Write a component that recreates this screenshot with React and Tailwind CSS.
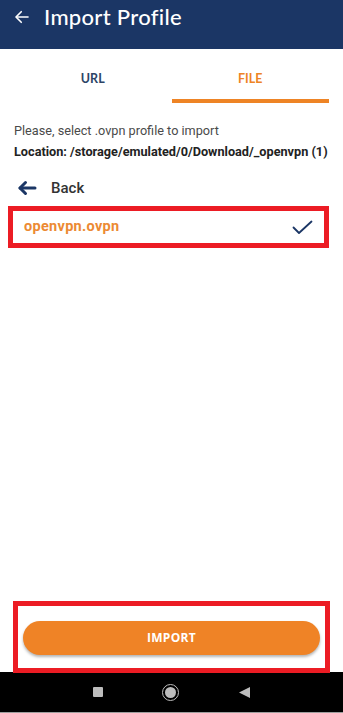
import React, { useState } from 'react';

const NAVY = '#1b3665';

export default function App() {
  const [tab, setTab] = useState('file');

  return (
    <div className="w-[343px] h-[713px] flex flex-col bg-white overflow-hidden" style={{ fontFamily: 'Roboto, "Liberation Sans", sans-serif' }}>
      {/* Toolbar */}
      <div className="h-[49px] shrink-0 bg-[#1b3665] flex items-center pl-[13px] pb-[16px]">
        <svg width="18" height="18" viewBox="0 0 24 24" fill="none" stroke="white" strokeWidth="2.2" strokeLinecap="round" strokeLinejoin="round">
          <path d="M20 12H5" />
          <path d="M11 5l-7 7 7 7" />
        </svg>
        <span className="ml-[13px] text-white text-[22px] leading-none font-medium tracking-[0.3px]" style={{ fontFamily: 'Lato, sans-serif' }}>Import Profile</span>
      </div>

      {/* Tabs */}
      <div className="flex h-[54px] shrink-0 pl-[14px] pr-[14px]" style={{ fontFamily: 'Lato, sans-serif' }}>
        <button onClick={() => setTab('url')} className="flex-1 flex flex-col items-center">
          <span className={`mt-[24px] text-[12.5px] font-bold leading-none ${tab === 'url' ? 'text-[#ee8425]' : 'text-[#2d4566]'}`}>URL</span>
          <span className={`mt-auto h-[4px] w-full ${tab === 'url' ? 'bg-[#ee8425]' : 'bg-transparent'}`} />
        </button>
        <button onClick={() => setTab('file')} className="flex-1 flex flex-col items-center">
          <span className={`mt-[24px] text-[12.5px] font-bold leading-none ${tab === 'file' ? 'text-[#ee8425]' : 'text-[#2d4566]'}`}>FILE</span>
          <span className={`mt-auto h-[4px] w-full ${tab === 'file' ? 'bg-[#ee8425]' : 'bg-transparent'}`} />
        </button>
      </div>

      {/* Info */}
      <div className="pl-[14px] pt-[21px]">
        <p className="text-[12.7px] leading-[14px] text-[#4a4a4a]">Please, select .ovpn profile to import</p>
        <p className="mt-[7px] text-[12.7px] leading-[14px] font-bold text-[#222] whitespace-nowrap">Location: /storage/emulated/0/Download/_openvpn (1)</p>
      </div>

      {/* Back row */}
      <div className="flex items-center h-[24px] mt-[17px] pl-[17px]">
        <svg width="20" height="16" viewBox="0 0 20 16" fill="none" stroke={NAVY} strokeWidth="3" strokeLinecap="round" strokeLinejoin="round">
          <path d="M18 8H3" />
          <path d="M8.5 2.5L3 8l5.5 5.5" />
        </svg>
        <span className="ml-[14px] text-[15px] font-medium text-[#333]">Back</span>
      </div>

      {/* File row */}
      <div className="mt-[6px] ml-[8px] w-[321px] h-[42px] border-[5px] border-[#ec1c24] flex items-center pl-[11px] pr-[11px]">
        <span className="text-[14.5px] font-bold text-[#ec8a33] flex-1 tracking-[0.3px]">openvpn.ovpn</span>
        <svg width="21" height="15" viewBox="0 0 21 15" fill="none" stroke={NAVY} strokeWidth="1.8" strokeLinecap="round" strokeLinejoin="round">
          <path d="M1.5 7.5l5.5 5.5L19.5 1.5" />
        </svg>
      </div>

      <div className="flex-1" />

      {/* Import button area */}
      <div className="ml-[13px] w-[317px] h-[72px] border-[5px] border-[#ec1c24] flex items-center px-[5px] pt-[2px] -mb-[1px] relative z-10">
        <button className="w-full h-[34px] rounded-full bg-[#ef8326] text-white text-[12px] font-bold tracking-[0.3px] shadow-[0_2px_3px_rgba(0,0,0,0.3)]" style={{ fontFamily: '"Open Sans", sans-serif' }}>
          IMPORT
        </button>
      </div>

      {/* Android nav bar */}
      <div className="h-[40px] shrink-0 bg-black flex items-center justify-center">
        <div className="w-[10px] h-[10px] bg-[#bdbdbd] rounded-[1px]" />
        <div className="ml-[59px] w-[17px] h-[17px] rounded-full border-[1.5px] border-[#bdbdbd] flex items-center justify-center">
          <div className="w-[11px] h-[11px] rounded-full bg-[#bdbdbd]" />
        </div>
        <svg className="ml-[60px]" width="11" height="11" viewBox="0 0 11 11">
          <path d="M11 0L0 5.5 11 11z" fill="#bdbdbd" />
        </svg>
      </div>
      <div className="h-[1px] shrink-0 bg-[#9e9e9e]" />
    </div>
  );
}
